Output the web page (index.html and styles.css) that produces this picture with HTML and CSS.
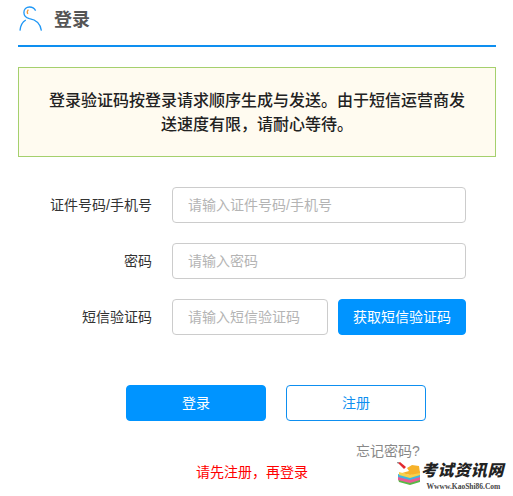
FILE: index.html
```html
<!DOCTYPE html>
<html lang="zh-CN">
<head>
<meta charset="utf-8">
<title>登录</title>
<link rel="stylesheet" href="styles.css">
</head>
<body>
<main class="page">
  <header class="head">
    <svg class="user-icon" width="24" height="26" viewBox="0 0 24 26" fill="none">
      <path d="M16.6 4.6C15.4 2.4 13.2 1 10.6 1C7.2 1 4.9 3.4 4.9 6.4C4.9 9.6 7.2 11.8 10.4 12.6C16.6 13.6 21.4 17.6 22.4 24.6" stroke="#1f97f5" stroke-width="1.3"/>
      <path d="M6.8 14C3.6 15.8 1.4 19.4 1 24.6" stroke="#1f97f5" stroke-width="1.3"/>
      <path d="M9.4 3.6C8.2 4.8 8 6.6 8.8 8" stroke="#f39a3c" stroke-width="1.3"/>
    </svg>
    <h1 class="title">登录</h1>
  </header>
  <p class="notice">登录验证码按登录请求顺序生成与发送。由于短信运营商发送速度有限，请耐心等待。</p>
  <form class="form">
    <div class="row">
      <label class="label">证件号码/手机号</label>
      <input class="input" placeholder="请输入证件号码/手机号">
    </div>
    <div class="row">
      <label class="label">密码</label>
      <input class="input" placeholder="请输入密码">
    </div>
    <div class="row">
      <label class="label">短信验证码</label>
      <input class="input input-code" placeholder="请输入短信验证码">
      <button type="button" class="btn btn-primary btn-sms">获取短信验证码</button>
    </div>
    <div class="actions">
      <button type="button" class="btn btn-primary btn-wide">登录</button>
      <button type="button" class="btn btn-outline btn-wide">注册</button>
    </div>
  </form>
  <div class="forgot">忘记密码?</div>
  <div class="hint">请先注册，再登录</div>
  <div class="logo">
    <svg class="logo-mark" width="24" height="24" viewBox="0 0 24 24">
      <path d="M1 17L13 20L23 17L23 20L13 23L2 20Z" fill="#58b947"/>
      <path d="M1 14L13 17L23 14L23 18L13 21L1 18Z" fill="#ea5a96"/>
      <path d="M1 12L13 15L23 12L23 15L13 18L1 15Z" fill="#3fb6e2"/>
      <path d="M2 10L13 13L23 9L23 13L13 16L2 13Z" fill="#f8d24a"/>
      <path d="M10 6L15 3L22 4L23 11L13 13L5 11L12 9Z" fill="#f6b22a"/>
      <path d="M1 1L3 0L9 5L7 7Z" fill="#e2282f"/>
      <path d="M0 0L2 0L1 2Z" fill="#777"/>
    </svg>
    <div class="logo-text">
      <div class="logo-name">考试资讯网</div>
      <div class="logo-url">Wwww.KaoShi86.Com</div>
    </div>
  </div>
</main>
</body>
</html>
```

FILE: styles.css
```css
* { box-sizing: border-box; }
html, body { margin: 0; padding: 0; background: #fff; }
body {
  width: 513px;
  height: 496px;
  overflow: hidden;
  font-family: "Liberation Sans", "Noto Sans CJK SC", sans-serif;
  font-size: 14px;
  color: #333;
}
.page { position: relative; width: 513px; height: 496px; padding: 0 17px 0 18px; }
.head {
  display: flex;
  align-items: center;
  gap: 11px;
  height: 47px;
  padding: 0 0 6px 1px;
  border-bottom: 2px solid #0e8ff0;
}
.user-icon { display: block; margin-top: -2px; }
.title { margin: 0; font-size: 18px; font-weight: 700; color: #555; line-height: 26px; }
.notice {
  margin: 20px 0 0;
  height: 90px;
  padding: 21px 30px;
  border: 1px solid #a5d06d;
  background: #fffbf0;
  font-size: 16px;
  line-height: 24px;
  font-weight: 500;
  color: #222;
  text-align: center;
}
.form { margin-top: 30px; }
.row { display: flex; align-items: center; height: 36px; margin-bottom: 20px; }
.label { width: 134px; margin-right: 20px; padding-bottom: 2px; text-align: right; color: #333; font-size: 14px; }
.input {
  width: 294px;
  height: 36px;
  padding: 0 15px;
  border: 1px solid #ccc;
  border-radius: 4px;
  background: #fff;
  font: inherit;
  color: #333;
  outline: none;
}
.input::placeholder { color: #b4b4b4; opacity: 1; }
.input-code { width: 156px; }
.btn {
  height: 36px;
  border-radius: 4px;
  font: inherit;
  cursor: pointer;
  padding: 0 0 2px;
}
.btn-primary { background: #0094ff; border: 1px solid #0094ff; color: #fff; }
.btn-outline { background: #fff; border: 1px solid #0e8ff0; color: #0e8ff0; }
.btn-sms { width: 128px; margin-left: 10px; }
.actions { display: flex; gap: 20px; margin-top: 50px; padding-left: 108px; }
.btn-wide { width: 140px; }
.forgot { position: absolute; left: 356px; top: 442px; color: #888; line-height: 18px; }
.hint { position: absolute; left: 196px; top: 463px; color: #f00; line-height: 18px; }
.logo { position: absolute; left: 397px; top: 462px; display: flex; }
.logo-mark { display: block; }
.logo-text { width: 85px; }
.logo-name {
  font-size: 16px;
  letter-spacing: 0.6px;
  font-weight: 900;
  font-style: italic;
  line-height: 18px;
  color: #222;
  white-space: nowrap;
}
.logo-url {
  font-family: "Liberation Serif", serif;
  font-size: 7.5px;
  font-weight: 700;
  line-height: 9px;
  margin-top: 2px;
  text-align: center;
  color: #444;
  white-space: nowrap;
}
```
